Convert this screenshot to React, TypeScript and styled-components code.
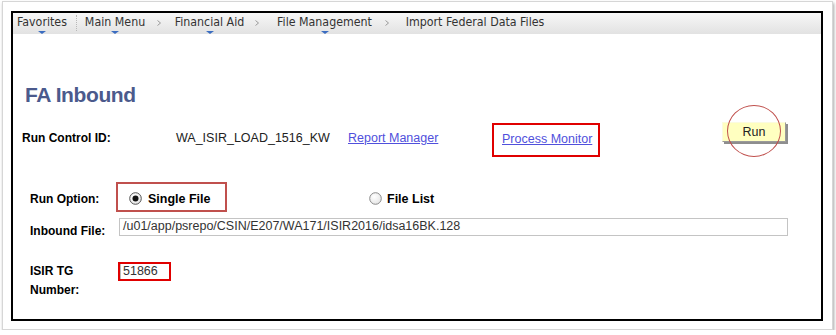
import React from 'react'
import styled, { createGlobalStyle } from 'styled-components'

const GlobalStyle = createGlobalStyle`
  html, body {
    margin: 0;
    padding: 0;
    background: #fff;
  }
  body {
    font-family: "Liberation Sans", Arial, sans-serif;
  }
`

const Frame = styled.div`
  box-sizing: border-box;
  margin: 1px 0 0 2px;
  width: 831px;
  height: 329px;
  border: 1px solid #d6d6d6;
  box-shadow: 1px 2px 3px rgba(0, 0, 0, 0.35);
  padding: 9px 0 0 8px;
  background: #fff;
`

const Panel = styled.div`
  box-sizing: border-box;
  width: 812px;
  height: 310px;
  border: 2px solid #000;
  display: flex;
  flex-direction: column;
`

const NavBar = styled.div`
  display: flex;
  align-items: flex-start;
  height: 21px;
  padding: 2px 0 0 4px;
  box-sizing: border-box;
  background: linear-gradient(#f7f7f7, #e2e2e2);
  font-family: "DejaVu Sans Condensed", "DejaVu Sans", sans-serif;
  font-stretch: condensed;
  font-size: 12.3px;
  color: #333;
`

const NavItem = styled.div<{ $w: number; $ml: number }>`
  display: flex;
  flex-direction: column;
  align-items: center;
  width: ${p => p.$w}px;
  margin-left: ${p => p.$ml}px;
  white-space: nowrap;
  line-height: 15px;
`

const NavText = styled.span`
  display: flex;
  justify-content: center;
  width: 100%;
  overflow: visible;
`

const Caret = styled.span`
  width: 0;
  height: 0;
  margin-top: 1px;
  border-left: 4px solid transparent;
  border-right: 4px solid transparent;
  border-top: 3px solid #3a6cc0;
`

const NavSep = styled.span<{ $ml: number }>`
  margin: 0 0 0 ${p => p.$ml}px;
  height: 16px;
  border-left: 1px dotted #b8b8b8;
`

const Chevron = styled.svg<{ $ml: number }>`
  margin: 4px 0 0 ${p => p.$ml}px;
  width: 8px;
  height: 8px;
`

const Title = styled.h1`
  margin: 49px 0 0 12px;
  font-size: 21px;
  line-height: 24px;
  font-weight: bold;
  letter-spacing: -0.4px;
  color: #4b5a8c;
`

const ControlRow = styled.div`
  display: flex;
  align-items: center;
  height: 34px;
  margin-top: 16px;
  padding-left: 9px;
`

const Cell = styled.div<{ $w: number }>`
  width: ${p => p.$w}px;
  margin-bottom: 4px;
  white-space: nowrap;
  font-size: 12.5px;
  line-height: 16px;
  color: #222;
`

const BoldLabel = styled(Cell)`
  font-size: 12px;
  font-weight: bold;
  color: #000;
`

const Link = styled.a`
  color: #5050dc;
  text-decoration: underline;
  font-size: 12.5px;
  line-height: 16px;
  cursor: pointer;
`

const ProcessBox = styled.div`
  box-sizing: border-box;
  display: flex;
  align-items: center;
  width: 108px;
  height: 34px;
  padding: 0 0 3px 8px;
  border: 2px solid #e00000;
`

const RunWrap = styled.div`
  position: relative;
  align-self: flex-start;
  margin: -1px 0 0 122px;
`

const RunButton = styled.button`
  box-sizing: border-box;
  width: 64px;
  height: 20px;
  padding: 0;
  border: 1px solid;
  border-color: #fbfbe0 #9a9a9a #9a9a9a #fbfbe0;
  box-shadow: 2px 2px 0 #8e8e8e;
  background: #ffffc0;
  font-family: "Liberation Sans", Arial, sans-serif;
  font-size: 12.5px;
  color: #222;
`

const Highlight = styled.span`
  position: absolute;
  left: 50%;
  top: 50%;
  width: 52px;
  height: 50px;
  transform: translate(-50%, -52%);
  border: 1.5px solid #c0504d;
  border-radius: 50%;
  pointer-events: none;
`

const FieldRow = styled.div<{ $mt: number; $align?: string }>`
  display: flex;
  align-items: ${p => p.$align || 'flex-start'};
  margin-top: ${p => p.$mt}px;
  padding-left: 17px;
`

const FieldLabel = styled.div<{ $w: number; $pt?: number; $lh?: number }>`
  width: ${p => p.$w}px;
  padding-top: ${p => p.$pt || 0}px;
  font-size: 12px;
  font-weight: bold;
  line-height: ${p => p.$lh || 16}px;
  color: #000;
`

const OptionBox = styled.div`
  box-sizing: border-box;
  display: flex;
  align-items: center;
  gap: 6px;
  width: 111px;
  height: 30px;
  padding: 3px 0 0 11px;
  border: 2px solid #c0504d;
`

const Option = styled.label<{ $ml?: number }>`
  display: flex;
  align-items: center;
  gap: 5px;
  margin-left: ${p => p.$ml || 0}px;
  font-size: 12.5px;
  font-weight: bold;
  color: #000;
`

const FileListOption = styled(Option)`
  padding-top: 3px;
`

const TextBox = styled.div`
  box-sizing: border-box;
  width: 669px;
  height: 18px;
  padding-left: 3px;
  border: 1px solid #c4c4c4;
  font-size: 12.5px;
  line-height: 15px;
  color: #333;
  white-space: nowrap;
`

const TgBox = styled.div`
  box-sizing: border-box;
  width: 53px;
  height: 19px;
  border: 2px solid #e00000;
  display: flex;
`

const TgField = styled.div`
  padding-left: 2px;
  border-left: 1px solid #bbb;
  font-size: 12.5px;
  line-height: 15px;
  color: #333;
`

function Radio({ checked }: { checked?: boolean }) {
  const id = checked ? 'rg1' : 'rg2'
  return (
    <svg width="13" height="13" viewBox="0 0 13 13">
      <defs>
        <radialGradient id={id} cx="40%" cy="35%" r="70%">
          <stop offset="0" stopColor="#ffffff" />
          <stop offset="1" stopColor="#e4e4e4" />
        </radialGradient>
      </defs>
      <circle cx="6.5" cy="6.5" r="5.8" fill={`url(#${id})`} stroke={checked ? '#555' : '#8a8a8a'} strokeWidth="1" />
      {checked && <circle cx="6.5" cy="6.5" r="3" fill="#111" />}
    </svg>
  )
}

function Chev({ ml }: { ml: number }) {
  return (
    <Chevron $ml={ml} viewBox="0 0 8 8">
      <path d="M2.5 1.5 L5.5 4 L2.5 6.5" fill="none" stroke="#9a9a9a" strokeWidth="1" />
    </Chevron>
  )
}

export default function App() {
  return (
    <>
      <GlobalStyle />
      <Frame>
        <Panel>
          <NavBar>
            <NavItem $w={50} $ml={0}>
              <NavText>Favorites</NavText>
              <Caret />
            </NavItem>
            <NavSep $ml={9} />
            <NavItem $w={60} $ml={8}>
              <NavText>Main Menu</NavText>
              <Caret />
            </NavItem>
            <Chev ml={10} />
            <NavItem $w={67} $ml={13}>
              <NavText>Financial Aid</NavText>
              <Caret />
            </NavItem>
            <Chev ml={10} />
            <NavItem $w={93} $ml={17}>
              <NavText>File Management</NavText>
              <Caret />
            </NavItem>
            <Chev ml={12} />
            <NavItem $w={140} $ml={14}>
              <NavText>Import Federal Data Files</NavText>
            </NavItem>
          </NavBar>

          <Title>FA Inbound</Title>

          <ControlRow>
            <BoldLabel $w={154}>Run Control ID:</BoldLabel>
            <Cell $w={172}>WA_ISIR_LOAD_1516_KW</Cell>
            <Cell $w={144}>
              <Link>Report Manager</Link>
            </Cell>
            <ProcessBox>
              <Link>Process Monitor</Link>
            </ProcessBox>
            <RunWrap>
              <RunButton>Run</RunButton>
              <Highlight />
            </RunWrap>
          </ControlRow>

          <FieldRow $mt={25} $align="center">
            <FieldLabel $w={86} $pt={3}>Run Option:</FieldLabel>
            <OptionBox>
              <Radio checked />
              <Option>Single File</Option>
            </OptionBox>
            <FileListOption $ml={142}>
              <Radio />
              File List
            </FileListOption>
          </FieldRow>

          <FieldRow $mt={6}>
            <FieldLabel $w={89} $pt={5}>Inbound File:</FieldLabel>
            <TextBox>/u01/app/psrepo/CSIN/E207/WA171/ISIR2016/idsa16BK.128</TextBox>
          </FieldRow>

          <FieldRow $mt={23}>
            <FieldLabel $w={88} $lh={19}>ISIR TG Number:</FieldLabel>
            <TgBox>
              <TgField>51866</TgField>
            </TgBox>
          </FieldRow>
        </Panel>
      </Frame>
    </>
  )
}
